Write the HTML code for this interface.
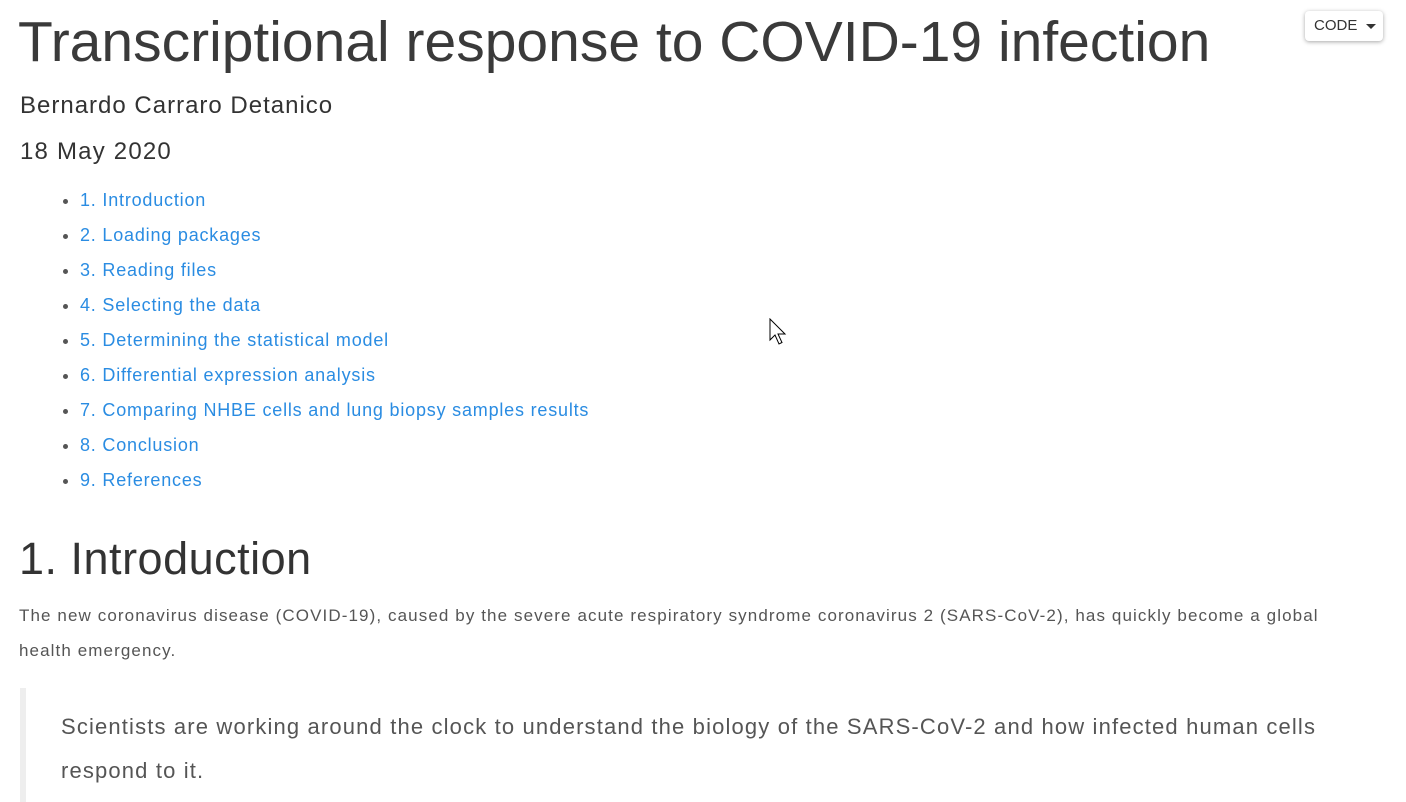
<!DOCTYPE html>
<html><head><style>
body{margin:0;width:1406px;height:802px;overflow:hidden;background:#fff;font-family:"Liberation Sans",sans-serif;color:#444;position:relative}
.a{position:absolute;white-space:nowrap;line-height:1}
ul{position:absolute;left:40px;top:188px;margin:0;padding-left:40px;list-style:disc;color:#555}
li{height:35px;font-size:18px;line-height:24px;letter-spacing:0.8px}
li span{color:#2a8ce2}
.code{position:absolute;left:1305px;top:11px;width:78px;height:30px;border-radius:4px;box-shadow:0 1px 4px rgba(0,0,0,.35);background:#fff;font-size:15px;line-height:30px;color:#333;box-sizing:border-box;padding-left:9px}
.code:after{content:"";position:absolute;left:61px;top:13px;border-left:5px solid transparent;border-right:5px solid transparent;border-top:5px solid #333}
.bq{position:absolute;left:20px;top:688px;width:6px;height:114px;background:#eee}
</style></head><body>
<div class="a" style="left:18px;top:14px;font-size:57px;color:#3a3a3a">Transcriptional response to COVID-19 infection</div>
<div class="code">CODE</div>
<div class="a" style="left:20px;top:94px;font-size:24px;color:#333;letter-spacing:1px">Bernardo Carraro Detanico</div>
<div class="a" style="left:20px;top:140px;font-size:24px;color:#333;letter-spacing:1.2px">18 May 2020</div>
<ul>
<li><span>1. Introduction</span></li>
<li><span>2. Loading packages</span></li>
<li><span>3. Reading files</span></li>
<li><span>4. Selecting the data</span></li>
<li><span>5. Determining the statistical model</span></li>
<li><span>6. Differential expression analysis</span></li>
<li><span>7. Comparing NHBE cells and lung biopsy samples results</span></li>
<li><span>8. Conclusion</span></li>
<li><span>9. References</span></li>
</ul>
<div class="a" style="left:19px;top:536px;font-size:45px;color:#333;letter-spacing:0.5px">1. Introduction</div>
<div class="a" style="left:19px;top:607px;font-size:17px;color:#555;letter-spacing:1.1px">The new coronavirus disease (COVID-19), caused by the severe acute respiratory syndrome coronavirus 2 (SARS-CoV-2), has quickly become a global</div>
<div class="a" style="left:19px;top:642px;font-size:17px;color:#555;letter-spacing:1.1px">health emergency.</div>
<div class="bq"></div>
<div class="a" style="left:61px;top:716px;font-size:22px;color:#555;letter-spacing:1.15px">Scientists are working around the clock to understand the biology of the SARS-CoV-2 and how infected human cells</div>
<div class="a" style="left:61px;top:760px;font-size:22px;color:#555;letter-spacing:1.15px">respond to it.</div>
<svg style="position:absolute;left:769px;top:318px" width="20" height="28" viewBox="0 0 20 28"><path d="M1 1 L1 22 L6 17 L10 26 L13 24.5 L9 16 L16 16 Z" fill="#fff" stroke="#000" stroke-width="1"/></svg>
</body></html>
